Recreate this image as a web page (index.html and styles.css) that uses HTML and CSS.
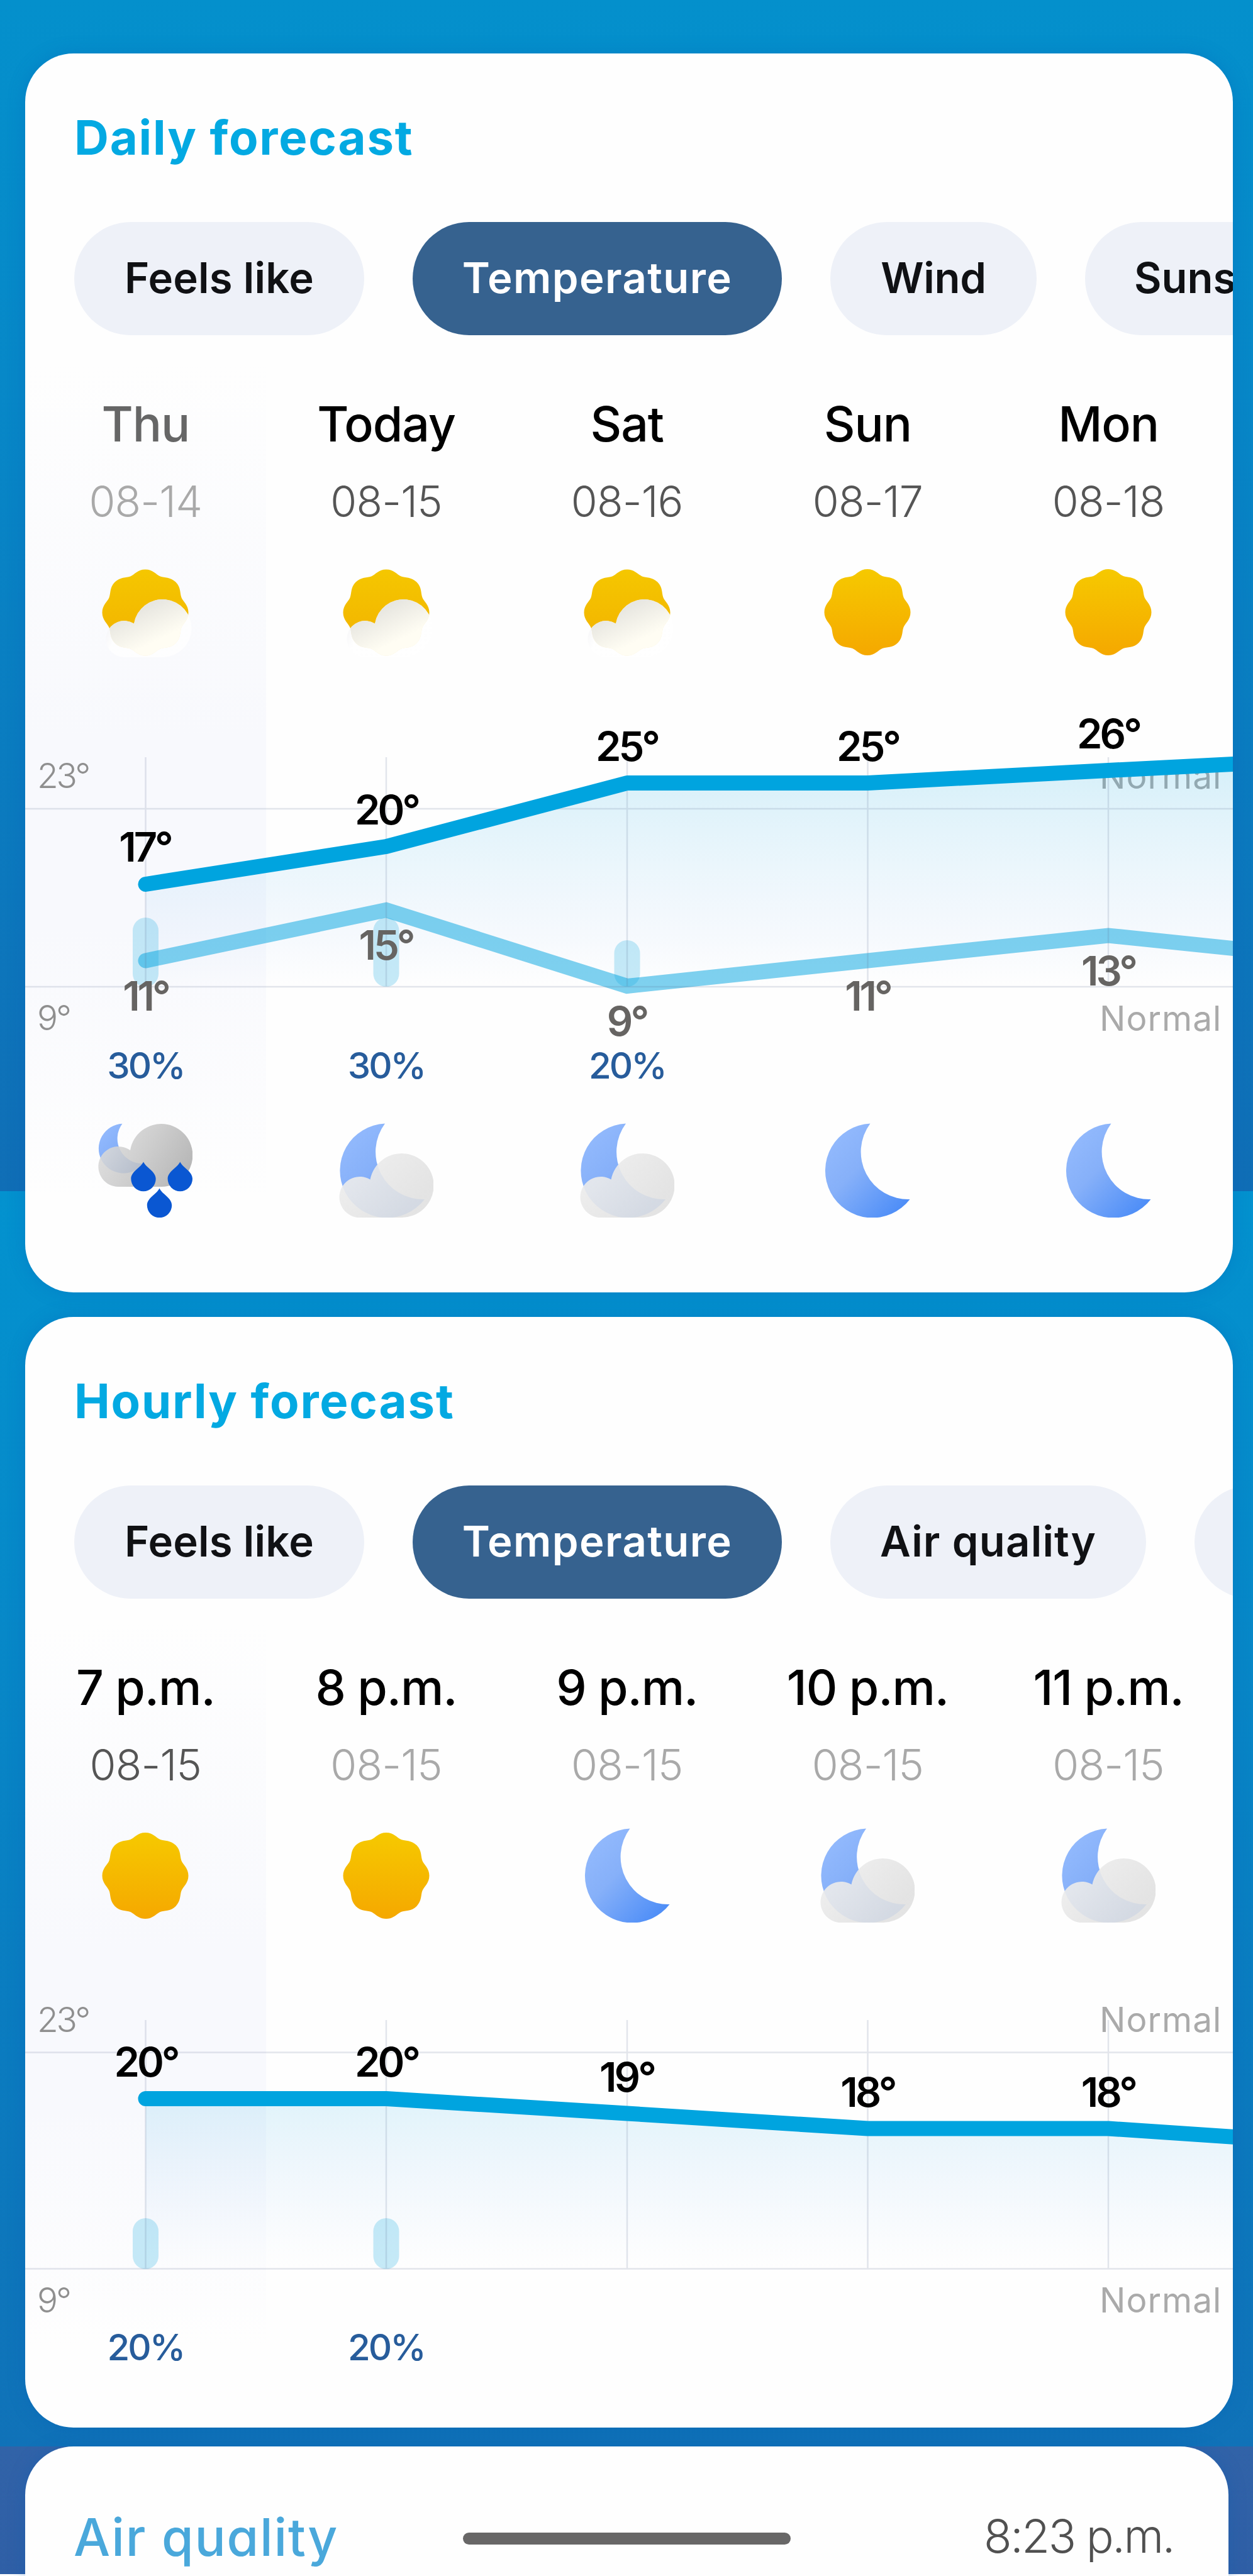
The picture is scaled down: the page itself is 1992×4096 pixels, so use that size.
FILE: index.html
```
<!DOCTYPE html>
<html lang="en">
<head>
<meta charset="utf-8">
<title>Weather forecast</title>
<link rel="stylesheet" href="styles.css">
</head>
<body>
<svg class="defs" width="0" height="0" aria-hidden="true">
  <defs>
    <linearGradient id="gSun" x1="0" y1="0" x2="0" y2="1"><stop offset="0" stop-color="#f6c900"/><stop offset="1" stop-color="#f5a800"/></linearGradient>
    <linearGradient id="gSunTop" x1="0" y1="0" x2="0" y2="1"><stop offset="0" stop-color="#f5c700"/><stop offset="1" stop-color="#f2b000"/></linearGradient>
    <linearGradient id="gMoon" x1="0.1" y1="0.1" x2="0.9" y2="0.95"><stop offset="0" stop-color="#93bafd"/><stop offset="0.4" stop-color="#86b0f9"/><stop offset="1" stop-color="#4b8cf7"/></linearGradient>
    <linearGradient id="gVeil" x1="0" y1="0" x2="0.6" y2="0.2"><stop offset="0" stop-color="#e9e9ee"/><stop offset="0.5" stop-color="#fff"/></linearGradient>
    <linearGradient id="gCream" gradientUnits="userSpaceOnUse" x1="-4" y1="-6" x2="20" y2="44"><stop offset="0" stop-color="#e8e7e1"/><stop offset="1" stop-color="#fffdf3"/></linearGradient>
    <linearGradient id="gCloud" x1="0.3" y1="0.2" x2="0.9" y2="0.6"><stop offset="0" stop-color="#ebebeb"/><stop offset="1" stop-color="#e1e1e1"/></linearGradient>
    <linearGradient id="gRain" x1="0" y1="0.2" x2="1" y2="0.6"><stop offset="0" stop-color="#dedede"/><stop offset="0.5" stop-color="#c8c8c8"/><stop offset="1" stop-color="#aeaeae"/></linearGradient>
    <linearGradient id="gDaily" gradientUnits="userSpaceOnUse" x1="0" y1="1215" x2="0" y2="1569"><stop offset="0" stop-color="#00a3de" stop-opacity="0.16"/><stop offset="0.45" stop-color="#3aaee8" stop-opacity="0.10"/><stop offset="0.78" stop-color="#5aa0f0" stop-opacity="0.05"/><stop offset="1" stop-color="#5aa0f0" stop-opacity="0"/></linearGradient>
    <linearGradient id="gHourly" gradientUnits="userSpaceOnUse" x1="0" y1="3337" x2="0" y2="3608"><stop offset="0" stop-color="#00a3de" stop-opacity="0.12"/><stop offset="0.45" stop-color="#3a9ee8" stop-opacity="0.07"/><stop offset="1" stop-color="#5aa0f0" stop-opacity="0"/></linearGradient>
    <path id="pSun" d="M0,-68.5C12,-68.5 17.3,-60.2 23.8,-57.5C30.3,-54.8 39.9,-56.9 48.4,-48.4C56.9,-39.9 54.8,-30.3 57.5,-23.8C60.2,-17.3 68.5,-12 68.5,0C68.5,12 60.2,17.3 57.5,23.8C54.8,30.3 56.9,39.9 48.4,48.4C39.9,56.9 30.3,54.8 23.8,57.5C17.3,60.2 12,68.5 0,68.5C-12,68.5 -17.3,60.2 -23.8,57.5C-30.3,54.8 -39.9,56.9 -48.4,48.4C-56.9,39.9 -54.8,30.3 -57.5,23.8C-60.2,17.3 -68.5,12 -68.5,0C-68.5,-12 -60.2,-17.3 -57.5,-23.8C-54.8,-30.3 -56.9,-39.9 -48.4,-48.4C-39.9,-56.9 -30.3,-54.8 -23.8,-57.5C-17.3,-60.2 -12,-68.5 0,-68.5Z"/>
    <path id="pMoon" d="M79.5,.5A75,75 0 1 0 142.5,121A75.5,75.5 0 0 1 79.5,.5Z"/>
    <path id="pPuff" d="M41.5,147A29,29 0 1 1 57,93.5A46,46 0 1 1 103,147Z"/>
    <clipPath id="cPuff"><use href="#pPuff"/></clipPath>
    <path id="pDrop" d="M0,0C5,10 19.7,15 19.7,27A19.7,19.7 0 0 1 -19.7,27C-19.7,15 -5,10 0,0Z"/>
    <symbol id="sun" viewBox="0 0 150 150"><use href="#pSun" x="75" y="75.5" fill="url(#gSun)"/></symbol>
    <symbol id="moon" viewBox="0 0 150 150"><use href="#pMoon" fill="url(#gMoon)"/></symbol>
    <symbol id="partly" viewBox="0 0 150 150">
      <use href="#pSun" x="75" y="76" fill="url(#gSunTop)"/>
      <use href="#pPuff" fill="url(#gVeil)" fill-opacity="0.8"/>
      <g clip-path="url(#cPuff)"><use href="#pSun" x="75" y="76" fill="url(#gCream)"/></g>
    </symbol>
    <symbol id="mooncloud" viewBox="0 0 150 150">
      <use href="#pMoon" x="-6.5" fill="url(#gMoon)"/>
      <path d="M33,150A32.5,32.5 0 1 1 49.5,89.5A51,51 0 1 1 99,150Z" fill="url(#gCloud)" fill-opacity="0.91"/>
    </symbol>
    <symbol id="moonrain" viewBox="0 0 150 150">
      <use href="#pMoon" transform="translate(-3.3 .6) scale(.525)" fill="url(#gMoon)"/>
      <path d="M32,101A32,32 0 1 1 51,43A50,50 0 1 1 101,101Z" fill="url(#gRain)" fill-opacity="0.88"/>
      <g fill="#0a57d2"><use href="#pDrop" x="72" y="61.5"/><use href="#pDrop" x="130.3" y="61.5"/><use href="#pDrop" x="97.5" y="103.5"/></g>
    </symbol>
  </defs>
</svg>

<main class="page">
  <section class="card daily">
    <h2 class="title">Daily forecast</h2>
    <div class="chips">
      <span class="chip feels">Feels like</span>
      <span class="chip temp active">Temperature</span>
      <span class="chip wind">Wind</span>
      <span class="chip sunset">Sunset</span>
    </div>
    <div class="forecast">
      <div class="columns heads">
        <div class="head"><b class="dim">Thu</b><time class="faint">08-14</time><svg class="icon"><use href="#partly"/></svg></div>
        <div class="head"><b>Today</b><time>08-15</time><svg class="icon"><use href="#partly"/></svg></div>
        <div class="head"><b>Sat</b><time>08-16</time><svg class="icon"><use href="#partly"/></svg></div>
        <div class="head"><b>Sun</b><time>08-17</time><svg class="icon"><use href="#sun"/></svg></div>
        <div class="head"><b>Mon</b><time>08-18</time><svg class="icon"><use href="#sun"/></svg></div>
      </div>
      <svg class="chart" viewBox="40 1048 1920 692" width="1920" height="692">
        <g class="axis"><text x="59" y="1253">23°</text><text x="59" y="1638">9°</text><text class="word" x="1748" y="1253.500">Normal</text><text class="word" x="1748" y="1638.500">Normal</text></g>
        <path fill="url(#gDaily)" d="M231.500,1406L614,1346L997,1245H1379.500L1762,1225L1960,1215V1569H231.500Z"/>
        <g class="bars"><rect x="211" y="1459" width="41" height="110" rx="20.500"/><rect x="593.500" y="1459" width="41" height="110" rx="20.500"/><rect x="976.500" y="1495" width="41" height="74" rx="20.500"/></g>
        <path class="line low" d="M231.500,1527.500L614,1447L997,1568L1379.500,1527.500L1762,1487.500L1970,1509"/>
        <path class="grid" d="M40,1286H1960M40,1569H1960M231.500,1204V1569M614,1204V1569M997,1204V1569M1379.500,1204V1569M1762,1204V1569"/>
        <path class="line" d="M231.500,1406L614,1346L997,1245H1379.500L1762,1225L1970,1214.500"/>
        <g class="degrees"><text x="230.500" y="1370">17°</text><text x="614.500" y="1311">20°</text><text x="996.500" y="1210">25°</text><text x="1379.500" y="1210">25°</text><text x="1762" y="1190">26°</text></g>
        <g class="degrees lows"><text x="231.500" y="1607">11°</text><text x="613.500" y="1526">15°</text><text x="996.500" y="1647">9°</text><text x="1379.500" y="1607">11°</text><text x="1762" y="1567">13°</text></g>
        <g class="rain"><text x="231.500" y="1715">30%</text><text x="614" y="1715">30%</text><text x="997" y="1715">20%</text></g>
      </svg>
      <div class="columns nights">
        <svg class="icon"><use href="#moonrain"/></svg>
        <svg class="icon"><use href="#mooncloud"/></svg>
        <svg class="icon"><use href="#mooncloud"/></svg>
        <svg class="icon"><use href="#moon"/></svg>
        <svg class="icon"><use href="#moon"/></svg>
      </div>
    </div>
  </section>

  <section class="card hourly">
    <h2 class="title">Hourly forecast</h2>
    <div class="chips">
      <span class="chip feels">Feels like</span>
      <span class="chip temp active">Temperature</span>
      <span class="chip air">Air quality</span>
      <span class="chip next"></span>
    </div>
    <div class="forecast">
      <div class="columns heads">
        <div class="head"><b>7 p.m.</b><time>08-15</time><svg class="icon"><use href="#sun"/></svg></div>
        <div class="head"><b>8 p.m.</b><time class="faint">08-15</time><svg class="icon"><use href="#sun"/></svg></div>
        <div class="head"><b>9 p.m.</b><time class="faint">08-15</time><svg class="icon"><use href="#moon"/></svg></div>
        <div class="head"><b>10 p.m.</b><time class="faint">08-15</time><svg class="icon"><use href="#mooncloud"/></svg></div>
        <div class="head"><b>11 p.m.</b><time class="faint">08-15</time><svg class="icon"><use href="#mooncloud"/></svg></div>
      </div>
      <svg class="chart" viewBox="40 3057 1920 803" width="1920" height="803">
        <g class="axis"><text x="59" y="3231">23°</text><text x="59" y="3677">9°</text><text class="word" x="1748" y="3231">Normal</text><text class="word" x="1748" y="3677">Normal</text></g>
        <path fill="url(#gHourly)" d="M231.500,3337H614L997,3360.500L1379.500,3384.500H1762L1960,3398V3608H231.500Z"/>
        <g class="bars"><rect x="211" y="3527" width="41" height="81" rx="20.500"/><rect x="593.500" y="3527" width="41" height="81" rx="20.500"/></g>
        <path class="grid" d="M40,3263.500H1960M40,3607.500H1960M231.500,3212V3608M614,3212V3608M997,3212V3608M1379.500,3212V3608M1762,3212V3608"/>
        <path class="line" d="M231.500,3337H614L997,3360.500L1379.500,3384.500H1762L1970,3398.500"/>
        <g class="degrees"><text x="232" y="3302">20°</text><text x="614.500" y="3302">20°</text><text x="996.500" y="3325.500">19°</text><text x="1379.500" y="3349.500">18°</text><text x="1762" y="3349.500">18°</text></g>
        <g class="rain"><text x="231.500" y="3753">20%</text><text x="614" y="3753">20%</text></g>
      </svg>
    </div>
  </section>

  <section class="card air-card">
    <h2 class="air-title">Air quality</h2>
    <span class="updated">8:23 p.m.</span>
    <span class="home-bar"></span>
  </section>
</main>
</body>
</html>
```
FILE: styles.css
```
* { box-sizing: border-box; }
body {
  margin: 0;
  font-family: Inter, "Noto Sans", sans-serif;
  background: #fff;
}
.defs { position: absolute; }
.page {
  width: 1992px;
  height: 4096px;
  padding: 85px 32px 0 40px;
  overflow: hidden;
  background: linear-gradient(180deg,
    #0490cc 0, #0788c8 600px, #0a7cc0 1200px, #106eb6 1894px,
    #0392cf 1894px, #0788c8 2600px, #0a7cc0 3200px, #1072b8 3890px,
    #3163a8 3890px, #2f5fa6 4093px, #fff 4093px);
}
.card {
  position: relative;
  width: 1920px;
  border-radius: 77px;
  background: #fefefe;
  overflow: hidden;
  box-shadow: 0 0 28px rgba(0, 90, 180, .28);
}
.daily { height: 1970px; margin-bottom: 39px; }
.hourly { height: 1766px; margin-bottom: 30px; }
.daily, .hourly { padding-top: 87px; }
.title {
  margin: 0 0 89px;
  padding-left: 78px;
  font-size: 76px;
  line-height: 92px;
  font-weight: 650;
  letter-spacing: 1.8px;
  color: #03a9e2;
}
.chips { display: flex; gap: 77px; padding-left: 78px; }
.chip {
  flex: none;
  height: 180px;
  padding-bottom: 3px;
  border-radius: 90px;
  display: flex;
  align-items: center;
  justify-content: center;
  background: #eef1f8;
  color: #101114;
  font-size: 67px;
  font-weight: 620;
}
.chip.active { background: #36628f; color: #fff; }
.feels { width: 461px; letter-spacing: .2px; }
.temp { width: 587px; letter-spacing: 1.4px; }
.wind { width: 328px; letter-spacing: -.3px; }
.air { width: 502px; letter-spacing: 1.2px; }
.sunset { width: 400px; justify-content: flex-start; padding-left: 78px; }
.next { width: 400px; }

.forecast {
  padding-top: 94px;
  background: linear-gradient(180deg, rgba(246, 248, 252, 0) 3%, #f8f9fd 42%, #f8f9fd 62%, rgba(251, 252, 254, 0) 90%) no-repeat 0 0 / 383px 100%;
}
.columns { display: grid; grid-template-columns: repeat(5, 382.7px); }
.head { display: flex; flex-direction: column; align-items: center; }
.head b {
  font-size: 77px;
  line-height: 94px;
  font-weight: 500;
  letter-spacing: -1.1px;
  color: #000;
  margin-bottom: 35px;
  white-space: nowrap;
}
.head b.dim { color: #666; }
.head time {
  font-size: 68px;
  line-height: 82px;
  font-weight: 300;
  letter-spacing: -.8px;
  color: #555;
  margin-bottom: 60px;
}
.head time.faint { color: #a9a9a9; }
.icon { display: block; width: 150px; height: 150px; }
.nights { justify-items: center; margin-top: 46px; padding-bottom: 119px; }

.chart { display: block; }
.grid { stroke: rgba(90, 105, 140, .17); stroke-width: 2.5; fill: none; }
.line { stroke: #00a4df; stroke-width: 24; fill: none; stroke-linecap: round; stroke-linejoin: round; }
.low { stroke-opacity: .5; stroke-linejoin: miter; }
.bars { fill: #00a3de; fill-opacity: .22; }
.axis text { font-size: 55px; font-weight: 300; letter-spacing: -3.2px; fill: #8f8f8f; }
.axis .word { font-weight: 400; letter-spacing: 1px; fill: #aaa; }
.degrees text { font-size: 65px; font-weight: 590; letter-spacing: -4px; text-anchor: middle; fill: #000; }
.degrees.lows text { fill: #666462; }
.rain text { font-size: 58px; font-weight: 500; letter-spacing: -3px; text-anchor: middle; fill: #275c9b; }

.air-card {
  width: 1913px;
  height: 260px;
  border-radius: 77px 77px 0 0;
  display: flex;
  justify-content: space-between;
  align-items: flex-start;
  padding: 95px 87px 0 77px;
}
.air-title {
  margin: 0;
  font-size: 82px;
  line-height: 100px;
  font-weight: 530;
  letter-spacing: 1.8px;
  font-feature-settings: "cv11";
  color: #4aa8db;
}
.updated {
  font-size: 73px;
  line-height: 96px;
  font-weight: 300;
  letter-spacing: -2.4px;
  color: #505050;
}
.home-bar {
  position: absolute;
  left: 696px;
  top: 137px;
  width: 521px;
  height: 19px;
  border-radius: 10px;
  background: #686767;
}
```
